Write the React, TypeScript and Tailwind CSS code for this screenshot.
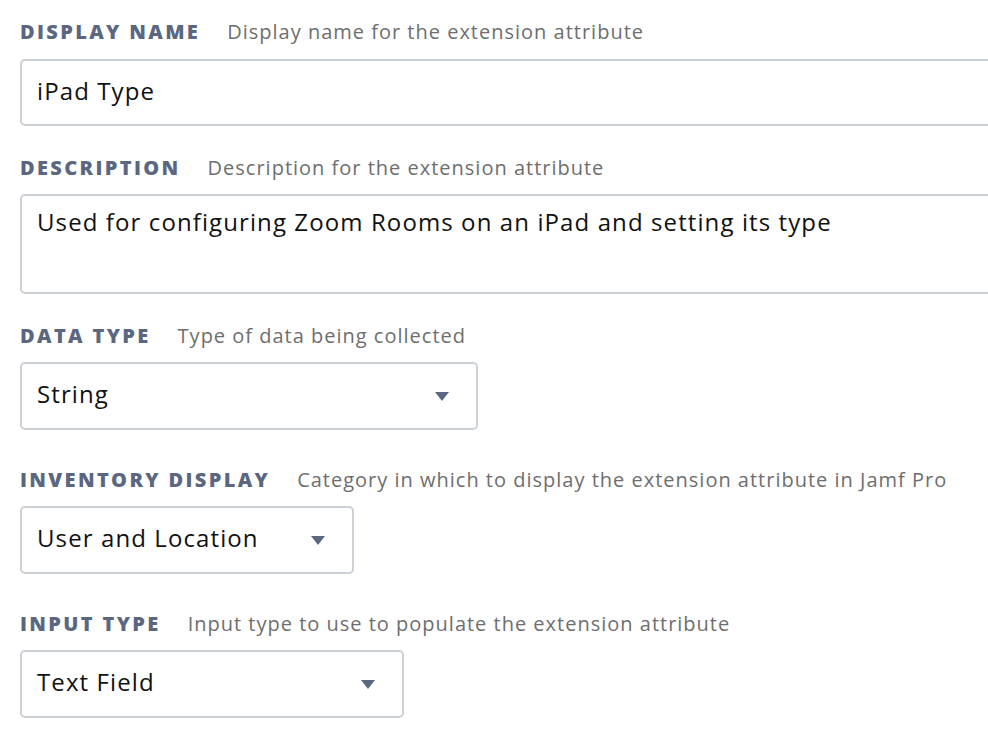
import React from "react";

const font = { fontFamily: "'Open Sans', Lato, sans-serif" };

function Label({ title, hint }: { title: string; hint: string }) {
  return (
    <div className="flex items-center h-[28px] whitespace-nowrap">
      <span className="text-[20px] font-extrabold tracking-[2.35px] text-[#5b6780] leading-none">{title}</span>
      <span className="ml-[27px] text-[20px] tracking-[1px] text-[#6e6e6e] leading-none">{hint}</span>
    </div>
  );
}

function Caret() {
  return (
    <svg width="14" height="9" viewBox="0 0 14 9" className="shrink-0">
      <path d="M0 0 H14 L7 9 Z" fill="#5b6780" />
    </svg>
  );
}

function Select({ value, width }: { value: string; width: string }) {
  return (
    <div className={`flex items-center justify-between h-[68px] border-2 border-[#ccd0d7] rounded-[5px] pl-[15px] pr-[27px] bg-white ${width}`}>
      <span className="text-[24px] tracking-[1.1px] text-[#111] leading-none mb-[4px]">{value}</span>
      <Caret />
    </div>
  );
}

export default function App() {
  return (
    <div className="w-[988px] h-[740px] overflow-hidden bg-white pl-[20px] pt-[18px]" style={font}>
      <Label title="DISPLAY NAME" hint="Display name for the extension attribute" />
      <div className="mt-[13px] w-[1000px] h-[67px] border-2 border-[#ccd0d7] rounded-[5px] flex items-center pl-[15px]">
        <span className="text-[24px] tracking-[1.1px] text-[#111] leading-none mb-[4px]">iPad Type</span>
      </div>

      <div className="mt-[28px]">
        <Label title="DESCRIPTION" hint="Description for the extension attribute" />
      </div>
      <div className="mt-[12px] w-[1000px] h-[100px] border-2 border-[#ccd0d7] rounded-[5px] pl-[15px] pt-[14px]">
        <span className="text-[24px] tracking-[1.1px] text-[#111] leading-none">Used for configuring Zoom Rooms on an iPad and setting its type</span>
      </div>

      <div className="mt-[28px]">
        <Label title="DATA TYPE" hint="Type of data being collected" />
      </div>
      <div className="mt-[12px]">
        <Select value="String" width="w-[458px]" />
      </div>

      <div className="mt-[36px]">
        <Label title="INVENTORY DISPLAY" hint="Category in which to display the extension attribute in Jamf Pro" />
      </div>
      <div className="mt-[12px]">
        <Select value="User and Location" width="w-[334px]" />
      </div>

      <div className="mt-[36px]">
        <Label title="INPUT TYPE" hint="Input type to use to populate the extension attribute" />
      </div>
      <div className="mt-[12px]">
        <Select value="Text Field" width="w-[384px]" />
      </div>
    </div>
  );
}
